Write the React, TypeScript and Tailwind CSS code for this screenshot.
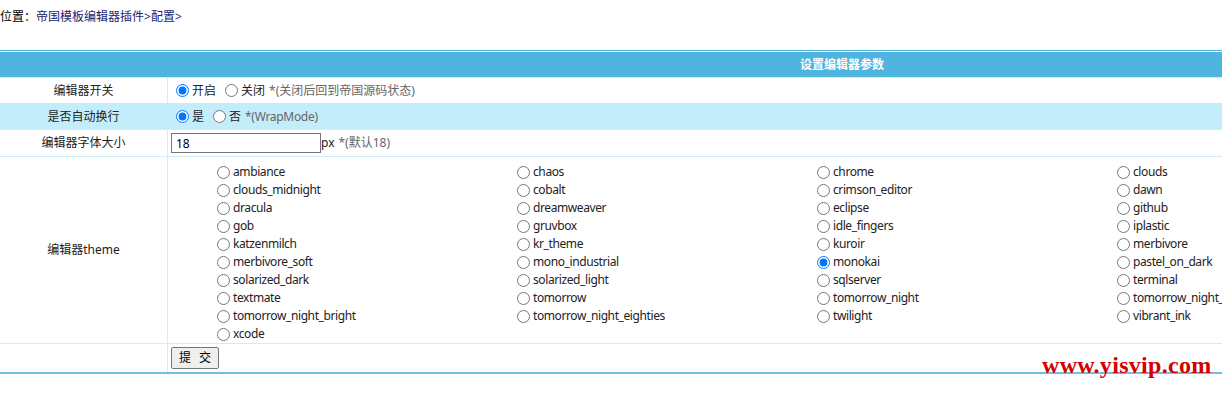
import React from "react";

const THEMES = [
  "ambiance", "chaos", "chrome", "clouds",
  "clouds_midnight", "cobalt", "crimson_editor", "dawn",
  "dracula", "dreamweaver", "eclipse", "github",
  "gob", "gruvbox", "idle_fingers", "iplastic",
  "katzenmilch", "kr_theme", "kuroir", "merbivore",
  "merbivore_soft", "mono_industrial", "monokai", "pastel_on_dark",
  "solarized_dark", "solarized_light", "sqlserver", "terminal",
  "textmate", "tomorrow", "tomorrow_night", "tomorrow_night_blue",
  "tomorrow_night_bright", "tomorrow_night_eighties", "twilight", "vibrant_ink",
  "xcode",
];

function Radio({ name, checked }: { name: string; checked?: boolean }) {
  return (
    <input
      type="radio"
      name={name}
      defaultChecked={checked}
      className="m-0 ml-[5px] mr-[3px] h-[13px] w-[13px] shrink-0"
    />
  );
}

export default function App() {
  return (
    <div
      className="relative h-[394px] w-[1222px] overflow-hidden bg-white text-[12px] leading-[18px] text-[#222]"
      style={{ fontFamily: '"Noto Sans", "Noto Sans CJK SC", sans-serif' }}
    >
      <div className="flex h-[33px] items-center">
        <span className="text-black">位置：</span>
        <a className="text-[#1b2470]">帝国模板编辑器插件</a>
        <span className="text-[#1b2470]">&gt;</span>
        <a className="text-[#1b2470]">配置</a>
        <span className="text-[#1b2470]">&gt;</span>
      </div>

      <div className="mt-[17px] w-[1684px] border-t border-[#4fb4de]">
        <div className="mt-px flex h-[25px] items-center justify-center bg-[#4fb4de] font-bold text-white">
          设置编辑器参数
        </div>

        <div className="grid h-[26px] grid-cols-[168px_1fr] border-t border-[#cdeefa]">
          <div className="flex items-center justify-center border-r border-[#cdeefa]">编辑器开关</div>
          <div className="flex items-center pl-[3px]">
            <Radio name="open" checked />
            <span>开启</span>
            <span className="w-[4px]" />
            <Radio name="open" />
            <span>关闭</span>
            <span className="ml-[4px] text-[#666]">*(关闭后回到帝国源码状态)</span>
          </div>
        </div>

        <div className="grid h-[26px] grid-cols-[168px_1fr] border-t border-[#c4edfb] bg-[#c4edfb]">
          <div className="flex items-center justify-center border-r border-[#c4edfb]">是否自动换行</div>
          <div className="flex items-center pl-[3px]">
            <Radio name="wrap" checked />
            <span>是</span>
            <span className="w-[4px]" />
            <Radio name="wrap" />
            <span>否</span>
            <span className="ml-[4px] tracking-[-0.3px] text-[#666]">*(WrapMode)</span>
          </div>
        </div>

        <div className="grid h-[27px] grid-cols-[168px_1fr] border-t border-[#cdeefa]">
          <div className="flex items-center justify-center border-r border-[#cdeefa]">编辑器字体大小</div>
          <div className="flex items-center pl-[3px]">
            <input
              defaultValue="18"
              className="h-[20px] w-[150px] border border-[#767676] px-[4px] text-[12px] text-black outline-none"
            />
            <span>px</span>
            <span className="ml-[4px] text-[#666]">*(默认18)</span>
          </div>
        </div>

        <div className="grid h-[187px] grid-cols-[168px_1fr] border-t border-[#cdeefa]">
          <div className="flex items-center justify-center border-r border-[#cdeefa]">编辑器theme</div>
          <div className="pl-[44px] pt-[6px]">
            <div className="grid w-[1200px] grid-cols-[300px_300px_300px_300px]">
              {THEMES.map((t) => (
                <label key={t} className="flex h-[18px] items-center whitespace-nowrap">
                  <Radio name="theme" checked={t === "monokai"} />
                  <span className="tracking-[-0.4px]">{t}</span>
                </label>
              ))}
            </div>
          </div>
        </div>

        <div className="grid h-[29px] grid-cols-[168px_1fr] border-t border-[#cdeefa]">
          <div className="border-r border-[#cdeefa]" />
          <div className="flex items-center pl-[3px]">
            <button className="flex h-[22px] w-[48px] items-center justify-center gap-[8px] rounded-[2px] border border-[#767676] bg-[#efefef] text-black">
              <span>提</span>
              <span>交</span>
            </button>
          </div>
        </div>
        <div className="h-[2px] bg-[#6cc0e5]" />
      </div>

      <div
        className="absolute left-[1042px] top-[351px] text-[24px] font-bold leading-[28px] tracking-[0.3px] text-[#d40000]"
        style={{ fontFamily: '"Liberation Serif", serif' }}
      >
        www.yisvip.com
      </div>
    </div>
  );
}
